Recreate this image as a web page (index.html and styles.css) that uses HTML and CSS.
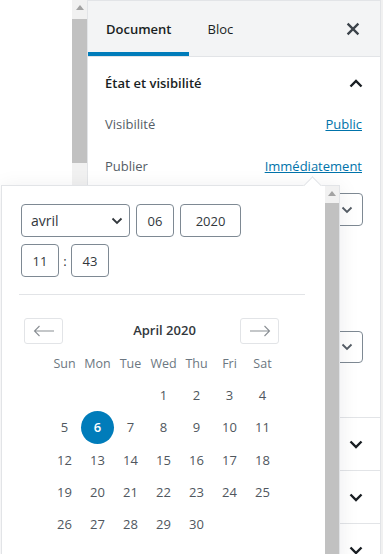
FILE: index.html
```html
<!DOCTYPE html>
<html lang="fr">
<head>
<meta charset="utf-8">
<title>Document</title>
<link rel="stylesheet" href="styles.css">
</head>
<body>
<div class="app">
  <div class="canvas"></div>
  <div class="vscroll">
    <div class="sb-arrow"><svg width="8" height="5" viewBox="0 0 8 5"><path d="M0 5 L4 0 L8 5 Z" fill="#a3a3a3"/></svg></div>
    <div class="sb-thumb"></div>
  </div>
  <aside class="sidebar">
    <div class="header">
      <div class="tab active">Document</div>
      <div class="tab">Bloc</div>
      <button class="close" aria-label="Fermer"><svg width="20" height="20" viewBox="0 0 20 20"><path d="M4.6 4.6 L15.4 15.4 M15.4 4.6 L4.6 15.4" stroke="#3c434a" stroke-width="2.3" fill="none"/></svg></button>
    </div>
    <section class="panel open">
      <div class="panel-title"><span>État et visibilité</span><svg class="chev" width="14" height="9" viewBox="0 0 14 9"><path d="M1.5 7.5 L7 2 L12.5 7.5" stroke="#191e23" stroke-width="2.4" fill="none"/></svg></div>
      <div class="row"><span class="label">Visibilité</span><a class="link" href="#">Public</a></div>
      <div class="row"><span class="label">Publier</span><a class="link" href="#">Immédiatement</a></div>
      <div class="field select-lg" aria-label="Format"><svg width="12" height="8" viewBox="0 0 12 8"><path d="M1.5 1.5 L6 6 L10.5 1.5" stroke="#555d66" stroke-width="1.8" fill="none"/></svg></div>
      <div class="checks"></div>
      <div class="field select-lg second" aria-label="Auteur"><svg width="12" height="8" viewBox="0 0 12 8"><path d="M1.5 1.5 L6 6 L10.5 1.5" stroke="#555d66" stroke-width="1.8" fill="none"/></svg></div>
      <div class="trash"></div>
    </section>
    <section class="panel closed" aria-label="Permalien">
      <div class="panel-title"><svg class="chev" width="14" height="9" viewBox="0 0 14 9"><path d="M1.5 1.5 L7 7 L12.5 1.5" stroke="#191e23" stroke-width="2.4" fill="none"/></svg></div>
    </section>
    <section class="panel closed" aria-label="Catégories">
      <div class="panel-title"><svg class="chev" width="14" height="9" viewBox="0 0 14 9"><path d="M1.5 1.5 L7 7 L12.5 1.5" stroke="#191e23" stroke-width="2.4" fill="none"/></svg></div>
    </section>
    <section class="panel closed" aria-label="Étiquettes">
      <div class="panel-title"><svg class="chev" width="14" height="9" viewBox="0 0 14 9"><path d="M1.5 1.5 L7 7 L12.5 1.5" stroke="#191e23" stroke-width="2.4" fill="none"/></svg></div>
    </section>
  </aside>
  <div class="edge"></div>
</div>

<div class="popover">
  <div class="pop-content">
    <div class="date-row">
      <div class="field month"><span>avril</span><svg width="12" height="8" viewBox="0 0 12 8"><path d="M1.5 1.5 L6 6 L10.5 1.5" stroke="#32373c" stroke-width="1.8" fill="none"/></svg></div>
      <div class="field num day">06</div>
      <div class="field num year">2020</div>
    </div>
    <div class="time-row">
      <div class="field num hm">11</div>
      <span class="colon">:</span>
      <div class="field num hm">43</div>
    </div>
    <div class="sep"></div>
    <div class="calendar">
      <div class="cal-nav">
        <button class="nav-btn" aria-label="Mois précédent"><svg width="22" height="12" viewBox="0 0 22 12"><path d="M21 6 H1.5 M6.5 1 L1.5 6 L6.5 11" stroke="#8a8f94" stroke-width="1.1" fill="none"/></svg></button>
        <div class="cal-title">April 2020</div>
        <button class="nav-btn" aria-label="Mois suivant"><svg width="22" height="12" viewBox="0 0 22 12"><path d="M1 6 H20.5 M15.5 1 L20.5 6 L15.5 11" stroke="#8a8f94" stroke-width="1.1" fill="none"/></svg></button>
      </div>
      <div class="grid weekdays">
        <span>Sun</span><span>Mon</span><span>Tue</span><span>Wed</span><span>Thu</span><span>Fri</span><span>Sat</span>
      </div>
      <div class="grid days">
        <span></span><span></span><span></span><span>1</span><span>2</span><span>3</span><span>4</span>
        <span>5</span><span class="sel"><b>6</b></span><span>7</span><span>8</span><span>9</span><span>10</span><span>11</span>
        <span>12</span><span>13</span><span>14</span><span>15</span><span>16</span><span>17</span><span>18</span>
        <span>19</span><span>20</span><span>21</span><span>22</span><span>23</span><span>24</span><span>25</span>
        <span>26</span><span>27</span><span>28</span><span>29</span><span>30</span><span></span><span></span>
      </div>
    </div>
  </div>
  <div class="pop-scroll">
    <div class="sb-arrow"><svg width="8" height="5" viewBox="0 0 8 5"><path d="M0 5 L4 0 L8 5 Z" fill="#a3a3a3"/></svg></div>
    <div class="sb-thumb"></div>
  </div>
</div>
</body>
</html>
```

FILE: styles.css
```css
* { box-sizing: border-box; }

body {
  margin: 0;
  width: 383px;
  height: 554px;
  overflow: hidden;
  position: relative;
  background: #fff;
  font-family: "Open Sans", "Noto Sans", sans-serif;
  font-size: 13px;
  color: #191e23;
}

.app {
  display: flex;
  height: 554px;
}

.canvas {
  width: 72px;
  background: #fff;
}

.vscroll {
  width: 15px;
  background: #f1f1f1;
  display: flex;
  flex-direction: column;
}

.sb-arrow {
  height: 19px;
  display: flex;
  align-items: center;
  justify-content: center;
  padding-bottom: 4px;
}

.vscroll .sb-thumb {
  height: 144px;
  background: #c1c1c1;
}

.sidebar {
  width: 294px;
  border-left: 1px solid #e2e4e7;
  border-right: 1px solid #e2e4e7;
  border-top: 1px solid #e2e4e7;
  display: flex;
  flex-direction: column;
  background: #fff;
}

.edge {
  width: 2px;
  background: #f1f1f1;
}

.header {
  height: 56px;
  flex: none;
  display: flex;
  background: #f3f4f5;
  border-bottom: 1px solid #e2e4e7;
}

.tab {
  display: flex;
  align-items: center;
  padding: 0 18px;
  color: #191e23;
}

.tab.active {
  font-weight: 600;
  box-shadow: inset 0 -4px 0 #007cba;
}

.close {
  margin-left: auto;
  margin-right: 15px;
  align-self: center;
  width: 24px;
  height: 24px;
  padding: 0;
  border: 0;
  background: none;
  display: flex;
  align-items: center;
  justify-content: center;
}

.panel {
  border-bottom: 1px solid #e2e4e7;
  padding: 0 18px 0 17px;
  flex: none;
}

.panel-title {
  height: 52px;
  display: flex;
  align-items: center;
  justify-content: space-between;
  font-weight: 600;
  color: #191e23;
}

.closed .panel-title { justify-content: flex-end; }

.chev { margin-right: -1px; }

.row {
  height: 30px;
  margin-bottom: 12px;
  display: flex;
  align-items: center;
  justify-content: space-between;
}

.label { color: #555d66; }

.link {
  color: #0073aa;
  text-decoration: underline;
}

.field {
  border: 1px solid #7e8993;
  border-radius: 4px;
  height: 33px;
  display: flex;
  align-items: center;
  color: #32373c;
  background: #fff;
}

.select-lg {
  margin-top: 6px;
  margin-right: -1px;
  justify-content: flex-end;
  padding: 0 9px 0 8px;
}

.select-lg.second {
  margin-top: 0;
  height: 32px;
}

.checks { height: 105px; }

.trash { height: 54px; }

.popover {
  position: absolute;
  left: 1px;
  top: 185px;
  width: 339px;
  height: 380px;
  background: #fff;
  border: 1px solid #e2e4e7;
  box-shadow: 0 3px 20px rgba(25, 30, 35, 0.08);
  display: flex;
}

.popover::before {
  content: "";
  position: absolute;
  left: 304px;
  top: -7px;
  width: 12px;
  height: 12px;
  background: #fff;
  border-top: 1px solid #e2e4e7;
  border-left: 1px solid #e2e4e7;
  transform: rotate(45deg);
}

.pop-content {
  flex: 1;
  padding: 18px 0 0 17px;
}

.pop-scroll {
  width: 14px;
  background: #f1f1f1;
  display: flex;
  flex-direction: column;
}

.pop-scroll .sb-arrow { height: 17px; padding-bottom: 2px; }

.pop-scroll .sb-thumb {
  flex: 1;
  background: #c1c1c1;
}

.date-row {
  display: flex;
  gap: 6px;
  margin-left: 2px;
}

.month {
  width: 109px;
  justify-content: space-between;
  padding: 0 6px 0 9px;
  font-size: 14px;
}

.num {
  justify-content: center;
  font-size: 13px;
}

.day { width: 38px; }
.year { width: 61px; }

.time-row {
  display: flex;
  align-items: center;
  margin-top: 7px;
  margin-left: 2px;
}

.hm { width: 38px; }

.colon {
  width: 12px;
  text-align: center;
  color: #32373c;
}

.sep {
  margin-top: 17px;
  width: 286px;
  height: 1px;
  background: #e2e4e7;
}

.calendar {
  margin-top: 23px;
}

.cal-nav {
  margin-left: 5px;
  width: 255px;
  display: flex;
  align-items: center;
}

.nav-btn {
  width: 39px;
  height: 26px;
  padding: 0;
  border: 1px solid #e2e4e7;
  border-radius: 3px;
  background: #fff;
  display: flex;
  align-items: center;
  justify-content: center;
}

.cal-title {
  flex: 1;
  text-align: center;
  padding-left: 26px;
  padding-bottom: 2px;
  font-weight: 600;
  color: #32373c;
}

.grid {
  display: grid;
  grid-template-columns: repeat(7, 33px);
  margin-left: 29px;
}

.grid span {
  height: 32px;
  display: flex;
  align-items: center;
  justify-content: center;
}

.weekdays {
  margin-top: 3px;
  font-size: 12.5px;
  color: #6c7781;
}

.days span {
  height: 32.3px;
  color: #50575e;
}

.days .sel b {
  width: 33px;
  height: 33px;
  flex: none;
  border-radius: 50%;
  background: #007cba;
  color: #fff;
  font-weight: 600;
  display: flex;
  align-items: center;
  justify-content: center;
}
```
